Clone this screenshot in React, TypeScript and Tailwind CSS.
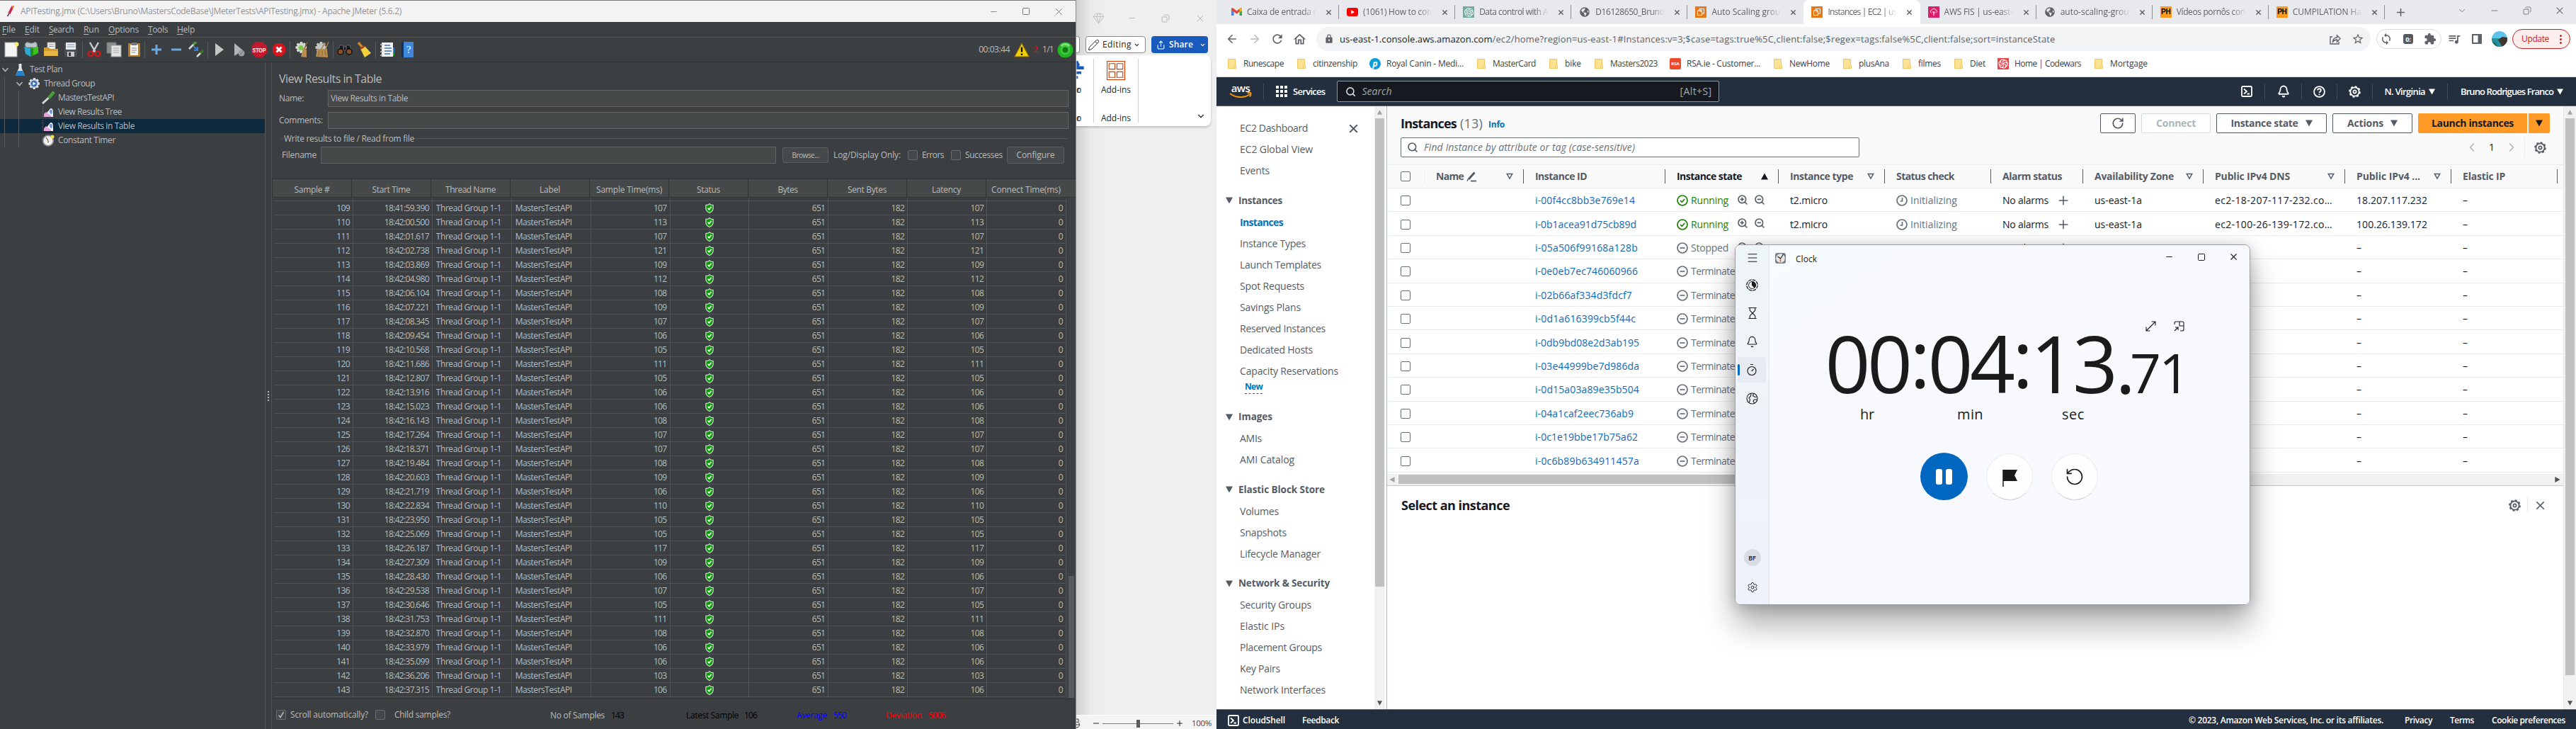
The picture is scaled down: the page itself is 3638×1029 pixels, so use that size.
import { useLayoutEffect, useRef, useState, type ReactNode } from "react";
import {
  ArrowLeft, ArrowRight, Bell, ChevronDown, ChevronLeft, ChevronRight, Copy, Gem, Hourglass,
  Menu, Minus, Pencil, Plus, RotateCcw, RotateCw, Search, Settings, Share, Square, Timer, X, ZoomIn, ZoomOut,
} from "lucide-react";
import { FaGlobeAmericas } from "react-icons/fa";
import { MdExtension, MdLock, MdOutlineHome, MdQueueMusic, MdRefresh, MdStarBorder, MdSync } from "react-icons/md";
import { SiOpenai, SiCodewars } from "react-icons/si";

/* Text whose tracking is adjusted so that it occupies an exact width. */
function Fit({ w, className = "", children }: { w: number; className?: string; children: ReactNode }) {
  const ref = useRef<HTMLSpanElement>(null);
  const [spacing, setSpacing] = useState(0);
  useLayoutEffect(() => {
    const el = ref.current;
    if (!el) return;
    el.style.letterSpacing = "0px";
    const next = (w - el.getBoundingClientRect().width) / Math.max(1, (el.textContent || "").length);
    el.style.letterSpacing = next + "px";
    setSpacing(next);
  }, [w]);
  return (
    <span ref={ref} className={"inline-block shrink-0 whitespace-pre " + className} style={{ letterSpacing: spacing }}>
      {children}
    </span>
  );
}

/* ------------------------------------------------------------------ JMeter */

const samples: [string, number][] = [
  ["18:41:59.390", 107], ["18:42:00.500", 113], ["18:42:01.617", 107], ["18:42:02.738", 121], ["18:42:03.869", 109],
  ["18:42:04.980", 112], ["18:42:06.104", 108], ["18:42:07.221", 109], ["18:42:08.345", 107], ["18:42:09.454", 106],
  ["18:42:10.568", 105], ["18:42:11.686", 111], ["18:42:12.807", 105], ["18:42:13.916", 106], ["18:42:15.023", 106],
  ["18:42:16.143", 108], ["18:42:17.264", 107], ["18:42:18.371", 107], ["18:42:19.484", 108], ["18:42:20.603", 109],
  ["18:42:21.719", 106], ["18:42:22.834", 110], ["18:42:23.950", 105], ["18:42:25.069", 105], ["18:42:26.187", 117],
  ["18:42:27.309", 109], ["18:42:28.430", 106], ["18:42:29.538", 107], ["18:42:30.646", 105], ["18:42:31.753", 111],
  ["18:42:32.870", 108], ["18:42:33.979", 106], ["18:42:35.099", 106], ["18:42:36.206", 103], ["18:42:37.315", 106],
];

const jHeaders: [string, number][] = [
  ["Sample #", 50], ["Start Time", 54], ["Thread Name", 71], ["Label", 29], ["Sample Time(ms)", 93],
  ["Status", 33], ["Bytes", 28], ["Sent Bytes", 55], ["Latency", 41], ["Connect Time(ms)", 98],
];

function Shield() {
  return (
    <svg width="14" height="16" viewBox="0 0 14 16">
      <path d="M7 .5 9 2.2l4 .6v5.4c0 3-2.4 5.4-6 7.3C3.400 13.600 1 11.200 1 8.200V2.800l4-.6z" fill="#dfe6df" stroke="#222" strokeWidth=".5" />
      <path d="M7 2.200 8.600 3.500l3 .5v4.200c0 2.300-1.800 4.200-4.600 5.800C4.200 12.400 2.400 10.500 2.400 8.200V4l3-.5z" fill="#0a9a0a" />
      <path d="m4.600 7.800 1.900 2 3.100-4" fill="none" stroke="#fff" strokeWidth="1.500" />
    </svg>
  );
}

function ToolSep() {
  return <span className="flex h-6 w-[4.500px] shrink-0 justify-center"><span className="w-px bg-[#55595b]" /></span>;
}

function Tool({ children }: { children: ReactNode }) {
  return (
    <span className="flex w-7 shrink-0 items-center justify-center">
      <svg width="22" height="22" viewBox="0 0 22 22" fill="none">{children}</svg>
    </span>
  );
}

const cog = "M9 0h3l.6 2.600 2.300-1.300 2 2-1.300 2.300L18 6.500v3l-2.600.7 1.300 2.300-2 2-2.300-1.300L11.700 16H8.700L8 13.300l-2.300 1.300-2-2L5 10.300 2.400 9.600v-3L5 5.900 3.700 3.600l2-2L8 2.900z";

function JMeterToolbar() {
  return (
    <div className="flex h-[35px] items-center border-b border-[#323232] bg-[#3c3f41] pl-[2px]">
      <Tool>
        <rect x="2" y="1" width="17" height="20" fill="#f4f4f2" stroke="#aaa" />
        <circle cx="18.500" cy="3.500" r="3" fill="#f5ee78" />
      </Tool>
      <Tool>
        <path d="M4 8C1 4 3 0 7 1s4 2 8 0 5 3 4 7z" fill="#b9c6cc" stroke="#7d8c92" />
        <path d="m1 7 9 2v12L3 17z" fill="#2ca8cf" />
        <path d="m10 9 11-2v9l-11 5z" fill="#3fc21c" />
        <path d="m10 9 4 1v9l-4 2z" fill="#1f8c18" />
      </Tool>
      <Tool>
        <path d="M6 1h11v12H6z" fill="#eee" stroke="#aaa" />
        <path d="M8 4h7M8 6.500h7" stroke="#999" />
        <path d="M1 8h7l2 2h11v10H1z" fill="#d79a23" />
        <path d="M1 13h20v7H1z" fill="#e8b445" />
      </Tool>
      <Tool>
        <path d="M2 2h18v19H2z" fill="#4a5054" />
        <path d="M4 1h14v10H4z" fill="#e6eaf0" />
        <path d="M6 4h10M6 7h10" stroke="#8a9bb5" />
        <path d="M6 14h10v7H6z" fill="#c9cccf" />
        <path d="M8 15h3v5H8z" fill="#333" />
      </Tool>
      <ToolSep />
      <Tool>
        <path d="M5 1l8 14M17 1 9 15" stroke="#c8ccd0" strokeWidth="2.500" />
        <ellipse cx="6" cy="17" rx="3.500" ry="3.500" stroke="#d01818" strokeWidth="2.400" />
        <ellipse cx="16" cy="17" rx="3.500" ry="3.500" stroke="#d01818" strokeWidth="2.400" />
      </Tool>
      <Tool>
        <rect x="1" y="1" width="13" height="15" fill="#8d9090" stroke="#6d7070" />
        <rect x="7" y="5" width="14" height="16" fill="#e4e5e3" stroke="#9a9a9a" />
        <path d="M10 9h8M10 12h8M10 15h8" stroke="#a5a5a5" />
      </Tool>
      <Tool>
        <rect x="3" y="2" width="17" height="19" rx="1" fill="#b87a1c" />
        <rect x="6" y="4" width="11" height="15" fill="#f3f3ef" />
        <path d="M8 1h7v4H8z" fill="#777" />
        <path d="M8 9h7M8 12h7M8 15h5" stroke="#8a8a8a" />
      </Tool>
      <ToolSep />
      <Tool><path d="M11 4v14M4 11h14" stroke="#6fa6dc" strokeWidth="3" /></Tool>
      <Tool><path d="M4 11h14" stroke="#6fa6dc" strokeWidth="3" /></Tool>
      <Tool>
        <path d="m1 10 8-8" stroke="#d8dcd8" strokeWidth="2.500" />
        <path d="m7 4 4-4" stroke="#3fa32c" strokeWidth="3.500" />
        <path d="m7 6 6 6m0-5v5H8" stroke="#3d7fd6" strokeWidth="1.800" />
        <path d="m12 21 6-6" stroke="#d8dcd8" strokeWidth="2.500" />
        <path d="m17 16 4-4" stroke="#2e7d22" strokeWidth="3.500" />
      </Tool>
      <ToolSep />
      <Tool><path d="M5 2v18l12-9z" fill="#c3c6c6" /></Tool>
      <Tool>
        <path d="M4 2v18l12-8z" fill="#b3b6b6" />
        <circle cx="14" cy="16" r="4.500" fill="#9a9d9d" />
        <path d="m11 19 6-6" stroke="#777" />
      </Tool>
      <Tool>
        <path d="M6.500 0h9L22 6.500v9L15.500 22h-9L0 15.500v-9z" fill="#c4182c" />
        <text x="11" y="14.500" fontSize="8.500" fontWeight="700" textAnchor="middle" fill="#fff" textLength="19" lengthAdjust="spacingAndGlyphs" fontFamily="Liberation Sans, sans-serif">STOP</text>
      </Tool>
      <Tool>
        <path d="M7 2h8l5 5v8l-5 5H7l-5-5V7z" fill="#d8141c" />
        <path d="m7.500 7.500 7 7m0-7-7 7" stroke="#fff" strokeWidth="3" />
      </Tool>
      <ToolSep />
      <Tool>
        <path d={cog} fill="#d5d8d5" />
        <circle cx="10" cy="8.500" r="3.500" fill="#7cc94a" />
        <path d="m19 0-4 10" stroke="#8c5a28" strokeWidth="1.500" />
        <path d="m13 9 5 2 0 11-8-1z" fill="#b98c50" />
      </Tool>
      <Tool>
        <path d={cog} fill="#c3c6c3" />
        <path d="m21 0-4 10M16 1l-5 9" stroke="#a87a40" strokeWidth="1.500" />
        <path d="m5 10 14 0 1 12-17-1z" fill="#b98c50" />
        <path d="m8 12-1 8m5-8v8m4-8 1 8" stroke="#8a6430" />
      </Tool>
      <ToolSep />
      <Tool>
        <path d="M4 5h5v8H2zM13 5h5l2 8h-7zM9 7h4v5H9z" fill="#15171a" stroke="#6d7070" strokeWidth=".8" />
        <circle cx="5" cy="14" r="4" fill="#8a4d28" stroke="#111" strokeWidth="1.500" />
        <circle cx="17" cy="14" r="4" fill="#8a4d28" stroke="#111" strokeWidth="1.500" />
      </Tool>
      <Tool>
        <path d="m2 1 6 7" stroke="#c8862a" strokeWidth="3.500" />
        <path d="m5 10 6-4 9 10-9 6z" fill="#f0d23a" />
        <path d="m5 10 6-4" stroke="#c03a1c" strokeWidth="2.500" />
      </Tool>
      <ToolSep />
      <Tool>
        <path d="M3 1h16v20H3z" fill="#f2f2f2" />
        <path d="M1 4h4M1 9h4M1 14h4M1 19h4" stroke="#ccc" strokeWidth="1.500" />
        <path d="M7 5h8M7 9h10M7 13h10M7 17h8" stroke="#3f6fc0" strokeWidth="1.500" />
        <path d="M20 8v6" stroke="#2a7de0" strokeWidth="2" /><path d="M20 14v6" stroke="#2aa02a" strokeWidth="2" />
      </Tool>
      <Tool>
        <path d="M3 0h4v22H3z" fill="#16325c" />
        <path d="M6 0h14v22H6z" fill="#3f86dd" />
        <text x="13" y="16" fontSize="15" textAnchor="middle" fill="#fff" fontFamily="Liberation Serif, serif">?</text>
      </Tool>
      <div className="ml-auto flex items-center pr-[3px]">
        <Fit w={44}>00:03:44</Fit>
        <svg className="ml-[6px]" width="22" height="21" viewBox="0 0 22 21">
          <path d="M11 1 21.300 20H.7z" fill="#f2cf0c" stroke="#8a6a00" strokeWidth="1.200" />
          <path d="M11 6.500v7M11 15.500v2.500" stroke="#111" strokeWidth="2.400" />
        </svg>
        <span className="ml-[5px] text-[#ff0000]">2</span>
        <Fit w={16} className="ml-[6px]">1/1</Fit>
        <svg className="ml-[5px]" width="23" height="23" viewBox="0 0 22 22">
          <circle cx="11" cy="11" r="10.500" fill="#22b422" />
          <ellipse cx="11" cy="5" rx="6" ry="3" fill="#b4f0b0" opacity=".7" />
          <circle cx="11" cy="11" r="6.500" fill="#3ccc3c" />
          <circle cx="11" cy="11" r="3.800" fill="#157a15" />
        </svg>
      </div>
    </div>
  );
}

function TreeChevron() {
  return (
    <svg width="9" height="7" viewBox="0 0 9 7" className="shrink-0">
      <path d="M.5 1 4.500 5.500 8.500 1" fill="none" stroke="#adb0b2" strokeWidth="1.800" />
    </svg>
  );
}

function ChartIcon() {
  return (
    <svg width="16" height="16" viewBox="0 0 16 16" className="shrink-0">
      <path d="M.5 0v16" stroke="#777" strokeDasharray="1 1" />
      <path d="M2 15v-4l3-3 4 2 3 5z" fill="#e5a5dc" />
      <path d="M7 8c2-1 3-5 5-5s3 2 3 5v7h-3c-1-3-3-4-5-5z" fill="#f0f4f8" />
      <path d="M10 6c1-2 4-2 4 2l-1 3c-2 0-3-2-3-5z" fill="#6b93d8" />
    </svg>
  );
}

function Tree() {
  return (
    <div className="relative w-[374px] shrink-0">
      <div className="flex h-5 items-center pl-[3px]">
        <TreeChevron />
        <svg className="ml-[9px] shrink-0" width="15" height="19" viewBox="0 0 15 19">
          <path d="M5.500 1h4v6l4.500 11H1L5.500 7z" fill="#dfe6ea" />
          <path d="M4 11h7l3 7H1z" fill="#2a7fc9" />
        </svg>
        <Fit w={46} className="ml-[6px]">Test Plan</Fit>
      </div>
      <div className="flex h-5 items-center pl-[23px]">
        <TreeChevron />
        <svg className="ml-[7px] shrink-0" width="18" height="18" viewBox="1.500 -1 17 18">
          <path d={cog} fill="#dadde4" /><circle cx="10" cy="8" r="4.600" fill="#3b6fb5" /><path d="m8.500 5.500 4 2.500-4 2.500z" fill="#fff" />
        </svg>
        <Fit w={72} className="ml-[5px]">Thread Group</Fit>
      </div>
      <div className="flex h-5 items-center pl-[59px]">
        <svg className="shrink-0" width="19" height="18" viewBox="0 0 19 18">
          <path d="m1 17 11-10" stroke="#d3d8d3" strokeWidth="3" /><path d="m11 8 5-6" stroke="#4d9a3c" strokeWidth="4.500" strokeLinecap="round" />
        </svg>
        <Fit w={79} className="ml-[4px]">MastersTestAPI</Fit>
      </div>
      <div className="flex h-5 items-center pl-[60px]"><ChartIcon /><Fit w={90} className="ml-[6px]">View Results Tree</Fit></div>
      <div className="flex h-5 items-center bg-[#0d293e] pl-[60px]"><ChartIcon /><Fit w={108} className="ml-[6px]">View Results in Table</Fit></div>
      <div className="flex h-5 items-center pl-[60px]">
        <svg className="shrink-0" width="17" height="17" viewBox="0 0 17 17">
          <circle cx="8" cy="8.500" r="7.300" fill="#f3f3ea" stroke="#8a8a9a" strokeWidth="1.800" />
          <path d="M8 8.500 5 4M8 8.500v3" stroke="#333" /><circle cx="14" cy="3" r="2.500" fill="#f0e04a" />
        </svg>
        <Fit w={81} className="ml-[5px]">Constant Timer</Fit>
      </div>
      <span className="absolute left-[6px] top-5 h-[100px] w-px bg-[#55595b]" />
      <span className="absolute left-[26px] top-10 h-[80px] w-px bg-[#55595b]" />
    </div>
  );
}

function JCheck({ on = false }: { on?: boolean }) {
  return (
    <span className="flex size-[14px] shrink-0 items-center justify-center rounded-[2px] border border-[#6b6b6b] bg-[#43494a]">
      {on && <svg width="10" height="10" viewBox="0 0 10 10"><path d="M1.500 5.500 4 8.500 8.500 1" fill="none" stroke="#b5b5b5" strokeWidth="1.600" /></svg>}
    </span>
  );
}

function Cell({ children }: { children: ReactNode }) {
  return <div className="flex w-[112px] items-center justify-end border-r border-[#505456] pr-[4px] tracking-[-0.65px]">{children}</div>;
}

function JMeter() {
  const menus: [string, number, string][] = [
    ["File", 19, "ml-0"], ["Edit", 21, "ml-[13px]"], ["Search", 35, "ml-[13px]"], ["Run", 22, "ml-[14px]"],
    ["Options", 43, "ml-[13px]"], ["Tools", 28, "ml-[13px]"], ["Help", 25, "ml-[13px]"],
  ];
  return (
    <div className="flex h-[1029px] w-[1520px] shrink-0 flex-col border-r border-[#8b8b8b] bg-[#3c3f41] font-['Open_Sans',sans-serif] text-[12px] leading-none text-[#bbbbbb]">
      <div className="flex h-[31px] shrink-0 items-center border-t border-[#7e797b] bg-[#f3f3f3] text-[#939393]">
        <svg className="ml-[9px]" width="11" height="16" viewBox="0 0 11 16">
          <path d="M9 1 4 11" stroke="#c32a4b" strokeWidth="3.500" /><path d="m8 2 2-1-1 3" stroke="#e8892a" strokeWidth="2" fill="none" /><path d="m4 11-2.500 4" stroke="#5a3a5a" strokeWidth="1.500" />
        </svg>
        <Fit w={538} className="ml-[9px] leading-4">{"APITesting.jmx (C:\\Users\\Bruno\\MastersCodeBase\\JMeterTests\\APITesting.jmx) - Apache JMeter (5.6.2)"}</Fit>
        <div className="ml-auto flex items-center pr-[16px] text-[#777]">
          <Minus size={13} strokeWidth={1.6} /><Square size={12} strokeWidth={2} className="ml-[33px]" /><X size={15} strokeWidth={1.6} className="ml-[33px]" />
        </div>
      </div>
      <div className="flex h-[22px] shrink-0 items-center border-b border-[#555555] pl-[3px]">
        {menus.map(([m, w, ml]) => (
          <span key={m} className={ml}><Fit w={w}><span className="underline underline-offset-2">{m[0]}</span>{m.slice(1)}</Fit></span>
        ))}
      </div>
      <JMeterToolbar />
      <div className="flex min-h-0 flex-1">
        <Tree />
        <div className="flex w-[10px] shrink-0 flex-col items-center justify-center gap-[2px] border-x border-[#515456]">
          {[0, 1, 2, 3].map((i) => <span key={i} className="size-[2px] bg-[#b5b8ba]" />)}
        </div>
        <div className="flex min-w-0 flex-1 flex-col">
          <div className="flex h-[39px] shrink-0 items-center pl-[10px] pt-[7px]"><Fit w={145} className="text-[16px]">View Results in Table</Fit></div>
          <div className="flex h-6 shrink-0 items-center pl-[10px] pr-[10px]">
            <Fit w={35}>Name:</Fit>
            <div className="ml-[34px] flex h-6 flex-1 items-center border border-[#646464] bg-[#45494a] pl-[3px]"><Fit w={109}>View Results in Table</Fit></div>
          </div>
          <div className="mt-[7px] flex h-6 shrink-0 items-center pl-[10px] pr-[10px]">
            <Fit w={62}>Comments:</Fit>
            <div className="ml-[7px] h-6 flex-1 border border-[#646464] bg-[#45494a]" />
          </div>
          <div className="mt-[6px] flex h-[15px] shrink-0 items-center pl-[12px] pr-[12px]">
            <span className="h-px w-[3px] bg-[#555]" /><Fit w={184} className="ml-[2px]">Write results to file / Read from file</Fit><span className="h-px flex-1 bg-[#555a5c]" />
          </div>
          <div className="mt-1 flex h-6 shrink-0 items-center pl-[14px] pr-[16px]">
            <Fit w={49}>Filename</Fit>
            <div className="ml-[6px] h-6 flex-1 border border-[#646464] bg-[#45494a]" />
            <div className="ml-[9px] flex h-[22px] w-[65px] items-center justify-center rounded-[3px] border border-[#5e6060] bg-[#45494b] text-[10px]"><Fit w={38}>Browse...</Fit></div>
            <Fit w={95} className="ml-[7px]">Log/Display Only:</Fit>
            <span className="ml-[10px]"><JCheck /></span>
            <Fit w={31} className="ml-[6px]">Errors</Fit>
            <span className="ml-[10px]"><JCheck /></span>
            <Fit w={53} className="ml-[6px]">Successes</Fit>
            <div className="ml-[6px] flex h-6 w-[81px] items-center justify-center rounded-[3px] border border-[#5e6060] bg-[#45494b]"><Fit w={54}>Configure</Fit></div>
          </div>
          <div className="mt-[21px] flex h-[27px] shrink-0 border-y border-l border-[#323435] bg-[#45494a]">
            {jHeaders.map(([h, w], i) => (
              <div key={h} className={"flex w-[112px] items-center justify-center pt-1 " + (i < 9 ? "border-r border-[#323435]" : "")}><Fit w={w}>{h}</Fit></div>
            ))}
          </div>
          <div className="flex h-[708px] shrink-0 border-b border-[#323435]">
            <div className="w-[1122px] pl-[3px] pt-[2px]">
              <div className="flex h-[3px] border-b border-[#505456]">
                {jHeaders.map(([h]) => <span key={h} className="w-[112px] border-r border-[#505456]" />)}
              </div>
              {samples.map(([time, ms], i) => (
                <div key={time} className="flex h-5 border-b border-[#505456]">
                  <Cell>{109 + i}</Cell>
                  <div className="flex w-[112px] items-center justify-end border-r border-[#505456] pr-[4px]"><Fit w={63}>{time}</Fit></div>
                  <div className="flex w-[112px] items-center border-r border-[#505456] pl-[5px]"><Fit w={92}>Thread Group 1-1</Fit></div>
                  <div className="flex w-[112px] items-center border-r border-[#505456] pl-[5px]"><Fit w={80}>MastersTestAPI</Fit></div>
                  <Cell>{ms}</Cell>
                  <div className="flex w-[112px] items-center justify-center border-r border-[#505456]"><Shield /></div>
                  <Cell>651</Cell><Cell>182</Cell><Cell>{ms}</Cell><Cell>0</Cell>
                </div>
              ))}
            </div>
            <div className="flex flex-1 flex-col items-center justify-end bg-[#3f4244] pb-px"><div className="h-[172px] w-2 bg-[#595c5e]" /></div>
          </div>
          <div className="flex flex-1 items-center pl-[6px] pt-[2px]">
            <JCheck on /><Fit w={110} className="ml-[6px]">Scroll automatically?</Fit>
            <span className="ml-[10px]"><JCheck /></span><Fit w={79} className="ml-[13px]">Child samples?</Fit>
            <Fit w={77} className="ml-[141px] mt-[2px]">No of Samples</Fit><Fit w={18} className="ml-[9px] mt-[2px] text-black">143</Fit>
            <Fit w={74} className="ml-[88px] mt-[2px] text-black">Latest Sample</Fit><Fit w={18} className="ml-[8px] mt-[2px] text-black">106</Fit>
            <Fit w={43} className="ml-[56px] mt-[2px] text-[#0000ff]">Average</Fit><Fit w={18} className="ml-[9px] mt-[2px] text-[#0000ff]">550</Fit>
            <Fit w={51} className="ml-[56px] mt-[2px] text-[#ff0000]">Deviation</Fit><Fit w={24} className="ml-[9px] mt-[2px] text-[#ff0000]">5006</Fit>
          </div>
        </div>
      </div>
    </div>
  );
}

/* -------------------------------------------------------------------- Word */

function Word() {
  return (
    <div className="flex h-[1029px] w-[198px] shrink-0 flex-col bg-[#efefef] bg-linear-to-r from-[#cfcfcf] via-[#eaeaea] via-10% to-[#efefef] to-20% font-['Open_Sans',sans-serif] text-[12px] leading-none text-[#242424]">
      <div className="flex h-[51px] shrink-0 items-center pl-[23px] text-[#b3b3b3]">
        <Gem size={17} strokeWidth={1.1} />
        <Minus size={13} strokeWidth={1.6} className="ml-[32px]" />
        <Copy size={12} strokeWidth={1.8} className="ml-[35px] -scale-x-100" />
        <X size={16} strokeWidth={1.5} className="ml-[35px]" />
      </div>
      <div className="flex h-6 shrink-0 items-center">
        <span className="h-6 w-[5px] rounded-r-[4px] border border-l-0 border-[#8a8a8a] bg-white" />
        <div className="ml-2 flex h-6 w-[85px] items-center rounded-[4px] border border-[#8a8a8a] bg-white pl-[2px]">
          <Pencil size={17} strokeWidth={1.4} /><Fit w={41} className="ml-[4px]">Editing</Fit><ChevronDown size={9} strokeWidth={3} className="ml-[3px]" />
        </div>
        <div className="ml-2 flex h-6 w-[80px] items-center rounded-[4px] bg-[#185abd] pl-[7px] text-white">
          <Share size={13} strokeWidth={2} /><Fit w={34} className="ml-[5px] font-semibold">Share</Fit><ChevronDown size={9} strokeWidth={3} className="ml-[9px]" />
        </div>
      </div>
      <div className="mt-[3px] flex h-[100px] w-[190px] shrink-0 rounded-r-lg bg-white shadow-[0_2px_3px_rgba(0,0,0,0.2)]">
        <div className="my-[5px] flex w-[25px] flex-col border-r border-[#cfcfcf] pt-[3px]">
          <svg width="12" height="28" viewBox="0 0 12 28"><path d="M0 0h2l3 6-2 3H0zM0 8h11v5H0zM0 16h7v4H0zM0 23h2v4H0z" fill="#185abd" /></svg>
          <Fit w={11} className="mt-[9px]">or</Fit><Fit w={11} className="mt-[28px]">or</Fit>
        </div>
        <div className="my-[5px] flex w-[63px] flex-col items-center border-r border-[#cfcfcf] pt-[3px]">
          <svg width="28" height="29" viewBox="0 0 28 29" fill="none" stroke="#d83b01" strokeWidth="1.200">
            <path d="M.6.6h26.800v27.800H.6zM3.500 4h9v8.500h-9zM15.500 4h9v8.500h-9zM3.500 16.500h9V25h-9zM15.500 16.500h9V25h-9z" />
          </svg>
          <Fit w={42} className="mt-[8px]">Add-ins</Fit><Fit w={42} className="mt-[28px]">Add-ins</Fit>
        </div>
        <ChevronDown size={14} strokeWidth={2} className="ml-auto mr-[7px] mt-[79px]" />
      </div>
      <div className="mt-auto flex h-[20px] shrink-0 items-center border-t border-white bg-[#f4f4f4] pt-[3px]">
        <svg width="5" height="14" viewBox="0 0 5 14" fill="none" stroke="#333"><path d="M0 1h3v4M0 5c6 0 6 8 0 8M0 9h4" /></svg>
        <Minus size={12} strokeWidth={2} className="ml-[17px]" />
        <div className="relative ml-[3px] h-px w-[100px] bg-[#7a7a7a]"><span className="absolute left-[48px] top-[-5px] h-[11px] w-[5px] bg-[#5a5a5a]" /></div>
        <Plus size={12} strokeWidth={2} className="ml-[3px]" /><Fit w={28} className="ml-[11px] text-[11.500px] text-[#444]">100%</Fit>
      </div>
    </div>
  );
}

/* ------------------------------------------------------------------ Chrome */

const GmailIcon = () => (
  <svg width="15" height="12" viewBox="0 0 15 12">
    <path d="M0 1.500V11h3.500V5z" fill="#4285f4" /><path d="M15 1.500V11h-3.500V5z" fill="#34a853" />
    <path d="M0 1.500C0 .2 1.500-.2 2.500.5l5 4 5-4c1-.7 2.500-.3 2.500 1V3L7.500 8.500 0 3z" fill="#ea4335" />
    <path d="M11.500 1.200 15 .8V4l-3.500 2.600z" fill="#fbbc04" />
  </svg>
);
const YoutubeIcon = () => (
  <svg width="16" height="12" viewBox="0 0 16 12"><rect width="16" height="12" rx="3" fill="#f00" /><path d="m6.300 3.300 4.500 2.700-4.500 2.700z" fill="#fff" /></svg>
);
const Ec2Icon = () => (
  <svg width="16" height="16" viewBox="0 0 16 16"><rect width="16" height="16" fill="#e8791b" /><path d="M3.500 6h6v6.500h-6zM6 6V3.500h6.500V10H9.500M8 8V4.500" fill="none" stroke="#fff" /></svg>
);
const FisIcon = () => (
  <svg width="16" height="16" viewBox="0 0 16 16"><rect width="16" height="16" fill="#dc1f6b" /><path d="M4.500 9C2.500 8 3.500 5 5.500 5c1-2.500 4.500-2 5 0 2 0 3 3 1 4M8 7v6M8 9l-2-1.500M8 10l2.500-2" fill="none" stroke="#fff" /></svg>
);
const PhIcon = () => (
  <span className="flex size-4 items-center justify-center bg-[#ff9a1f] font-['Liberation_Sans',sans-serif] text-[10px] font-bold tracking-tight text-black">PH</span>
);

const tabs: { icon: ReactNode; title: string; active?: boolean; noSep?: boolean }[] = [
  { icon: <GmailIcon />, title: "Caixa de entrada (" },
  { icon: <YoutubeIcon />, title: "(1061) How to con" },
  { icon: <span className="flex size-4 items-center justify-center bg-[#74aa9c] text-white"><SiOpenai size={13} /></span>, title: "Data control with A" },
  { icon: <FaGlobeAmericas size={14} />, title: "D16128650_Bruno" },
  { icon: <Ec2Icon />, title: "Auto Scaling grou", noSep: true },
  { icon: <Ec2Icon />, title: "Instances | EC2 | us", active: true, noSep: true },
  { icon: <FisIcon />, title: "AWS FIS | us-east-" },
  { icon: <FaGlobeAmericas size={14} />, title: "auto-scaling-grou" },
  { icon: <PhIcon />, title: "Vídeos pornôs con" },
  { icon: <PhIcon />, title: "CUMPILATION Ha" },
];

const Folder = () => (
  <svg width="12" height="14" viewBox="0 0 12 14"><path d="M.5.5h10v9h1v4H.5z" fill="#fde293" stroke="#efc75e" /><path d="M8.500 10v3.500" stroke="#efc75e" /></svg>
);

const bookmarks: [string, number, ReactNode?][] = [
  ["Runescape", 57], ["citinzenship", 63],
  ["Royal Canin - Medi...", 109, <span key="r" className="flex size-4 items-center justify-center rounded-full bg-[#0d9ddb] text-[12px] font-bold italic text-white">p</span>],
  ["MasterCard", 61], ["bike", 23], ["Masters2023", 67],
  ["RSA.ie - Customer...", 104, <span key="s" className="flex size-4 items-center justify-center rounded-[2px] bg-[#ee4b2b] text-[6px] font-bold text-white">RSA</span>],
  ["NewHome", 57], ["plusAna", 43], ["filmes", 32], ["Diet", 22],
  ["Home | Codewars", 94, <SiCodewars key="c" size={16} className="text-[#e8434c]" />],
  ["Mortgage", 53],
];

function ChromeFrame() {
  return (
    <>
      <div className="flex h-[34px] shrink-0 items-center bg-[#e8e9ed] pl-[9px] text-[12px] text-[#5f6368]">
        {tabs.map((t, i) => (
          <div key={i} className={"flex h-[34px] w-[164.100px] shrink-0 items-center pl-[11px] " + (t.active ? "rounded-t-lg bg-white" : "")}>
            <span className="flex w-4 justify-center">{t.icon}</span>
            <span className="ml-[7px] w-[98px] overflow-hidden whitespace-nowrap leading-5 [mask-image:linear-gradient(to_right,black_80%,transparent)]"><Fit w={97}>{t.title}</Fit></span>
            <X size={11} strokeWidth={3} className="ml-[12px] text-[#5a5d61]" />
            {!(t.noSep) && <span className="ml-auto h-5 w-px bg-[#8b8e93]" />}
          </div>
        ))}
        <Plus size={17} strokeWidth={2.2} className="ml-[14px]" />
        <div className="ml-auto flex items-center pb-[5px] pr-[15px] text-[#777]">
          <ChevronDown size={14} strokeWidth={1.6} /><Minus size={14} strokeWidth={1.6} className="ml-[32px]" />
          <Copy size={12} strokeWidth={1.8} className="ml-[33px] -scale-x-100" /><X size={16} strokeWidth={1.6} className="ml-[32px]" />
        </div>
      </div>
      <div className="flex h-[38px] shrink-0 items-center bg-white pt-[4px] text-[#5f6368]">
        <ArrowLeft size={18} strokeWidth={2.2} className="ml-[13px]" />
        <ArrowRight size={18} strokeWidth={2.2} className="ml-[14px] text-[#b9bbbe]" />
        <MdRefresh size={20} className="ml-[13px]" />
        <MdOutlineHome size={21} className="ml-[11px]" />
        <div className="ml-[13px] flex h-[34px] w-[1489px] items-center rounded-full bg-[#f1f3f4] pl-[11px]">
          <MdLock size={14} />
          <span className="ml-[8px] flex text-[13px]">
            <Fit w={215.5} className="text-[#202124]">us-east-1.console.aws.amazon.com</Fit>
            <Fit w={795}>/ec2/home?region=us-east-1#Instances:v=3;$case=tags:true%5C,client:false;$regex=tags:false%5C,client:false;sort=instanceState</Fit>
          </span>
          <svg className="ml-auto" width="16" height="15" viewBox="0 0 16 15" fill="none" stroke="currentColor" strokeWidth="1.400">
            <path d="M4 4H1v10h12v-3M4.500 11c.3-4 3-6 6-6V2l4.500 4.500L10.500 11V8c-3 0-4.500 1-6 3z" />
          </svg>
          <MdStarBorder size={18} className="ml-[15px] mr-[9px]" />
        </div>
        <div className="ml-[8px] flex h-[28px] w-[92px] items-center rounded-full border border-[#dadce0] pl-[4px]">
          <MdSync size={18} />
          <span className="ml-[15px] flex size-[14px] items-center justify-center rounded-[3px] bg-[#55585c] text-[9px] font-bold text-white">0:</span>
          <MdExtension size={18} className="ml-[15px]" />
        </div>
        <MdQueueMusic size={20} className="ml-[8px]" />
        <svg className="ml-[15px]" width="14" height="14" viewBox="0 0 14 14"><path d="M1 1h12v12H1z" fill="none" stroke="currentColor" strokeWidth="2" /><path d="M8.500 1H13v12H8.500z" fill="currentColor" /></svg>
        <svg className="ml-[14px]" width="22" height="22" viewBox="0 0 22 22">
          <clipPath id="av"><circle cx="11" cy="11" r="11" /></clipPath>
          <g clipPath="url(#av)"><path d="M0 0h22v22H0z" fill="#5fc4ea" /><path d="M0 10h22v12H0z" fill="#22929e" /><path d="m9 12 6-4 7 1v13h-7z" fill="#40352f" /><path d="M0 15c4-2 6 2 9 7H0z" fill="#2a6d63" /></g>
        </svg>
        <div className="ml-[7px] flex h-[28px] w-[82px] items-center rounded-full border border-[#c5221f] bg-[#fceeed] pl-[12px] text-[#c5221f]">
          <Fit w={39} className="text-[12px]">Update</Fit>
          <span className="ml-[15px] flex flex-col gap-[2px]">{[0, 1, 2].map((i) => <i key={i} className="size-[3px] rounded-full bg-[#c5221f]" />)}</span>
        </div>
      </div>
      <div className="flex h-[37px] shrink-0 items-center gap-[17px] border-b border-[#d5d7da] bg-white pl-[14px] text-[12px] text-[#3c4043]">
        {bookmarks.map(([b, w, icon]) => (
          <span key={b} className="flex items-center gap-2"><span className="flex w-4 justify-center">{icon || <Folder />}</span><Fit w={w}>{b}</Fit></span>
        ))}
      </div>
    </>
  );
}

/* --------------------------------------------------------------------- AWS */

function AwsGear({ size = 17, className = "" }: { size?: number; className?: string }) {
  return (
    <svg width={size} height={size} viewBox="0 0 16 16" fill="none" stroke="currentColor" className={"shrink-0 " + className}>
      <circle cx="8" cy="8" r="5.800" strokeWidth="1.800" /><circle cx="8" cy="8" r="7.100" strokeWidth="1.500" strokeDasharray="2.800 2.770" /><circle cx="8" cy="8" r="2" strokeWidth="1.600" />
    </svg>
  );
}
function Tri({ size = 10, up = false, hollow = false, className = "" }: { size?: number; up?: boolean; hollow?: boolean; className?: string }) {
  return (
    <svg width={size} height={size} viewBox="0 0 10 10" className={"shrink-0 " + (up ? "rotate-180 " : "") + className}>
      <path d={hollow ? "M1.300 1.500h7.400L5 8z" : "M0 .5h10L5 9.500z"} fill={hollow ? "none" : "currentColor"} stroke={hollow ? "currentColor" : "none"} strokeWidth="1.500" />
    </svg>
  );
}
function ShellIcon({ size = 16 }: { size?: number }) {
  return (
    <svg width={size} height={size} viewBox="0 0 16 16" fill="none" stroke="#fff" strokeWidth="1.800" className="shrink-0"><rect x="1" y="1" width="14" height="14" rx="1.500" /><path d="m4 4.500 4 3.500-4 3.500M8.500 11.500H12" /></svg>
  );
}
const HeadSep = ({ className = "" }: { className?: string }) => <span className={"h-[22px] w-px shrink-0 bg-[#414d5c] " + className} />;

function AwsHeader() {
  return (
    <div className="flex h-[41px] shrink-0 items-center border-b border-[#566270] bg-[#232f3e] text-[13px] font-semibold text-white">
      <div className="ml-[18px] flex w-[32px] flex-col items-center">
        <span className="text-[15px] font-semibold leading-[11px] tracking-[-0.5px]">aws</span>
        <svg width="32" height="9" viewBox="0 0 32 9" fill="none" stroke="#ff9900" strokeWidth="1.800"><path d="M1 2c8 6 20 7 28 1M25.500 1.500c2-.8 4-.8 5 0 .3 1.500-.5 3.500-1.800 5" /></svg>
      </div>
      <HeadSep className="ml-[16px]" />
      <div className="ml-[17px] grid size-4 grid-cols-3 gap-[2px]">{Array.from({ length: 9 }, (_, i) => <i key={i} className="bg-white" />)}</div>
      <Fit w={45.5} className="ml-[8px]">Services</Fit>
      <div className="ml-[16px] flex h-[30px] w-[540px] items-center rounded-[2px] border border-[#8c9a9d] bg-[#161920] pl-[11px] text-[14px] font-normal text-[#a0abae]">
        <Search size={15} strokeWidth={2.6} className="text-[#d5dbdb]" /><Fit w={42} className="ml-[9px] italic">Search</Fit><Fit w={45} className="ml-auto mr-[9px]">[Alt+S]</Fit>
      </div>
      <div className="ml-auto flex items-center pr-[18px]">
        <ShellIcon /><HeadSep className="ml-[17px]" />
        <Bell size={18} strokeWidth={2.4} className="ml-[17px]" /><HeadSep className="ml-[16px]" />
        <svg className="ml-[16px]" width="17" height="17" viewBox="0 0 16 16" fill="none" stroke="#fff" strokeWidth="1.700"><circle cx="8" cy="8" r="7" /><path d="M5.800 6.200c0-3 4.400-2.800 4.400-.2C10.200 7.700 8 7.700 8 9.500M8 10.800v1.700" /></svg><HeadSep className="ml-[16px]" />
        <AwsGear className="ml-[16px]" /><HeadSep className="ml-[16px]" />
        <Fit w={57.5} className="ml-[17px]">N. Virginia</Fit><Tri size={9} className="ml-[5px]" />
        <HeadSep className="ml-[17px]" />
        <Fit w={131} className="ml-[18px]">Bruno Rodrigues Franco</Fit><Tri size={9} className="ml-[5px]" />
      </div>
    </div>
  );
}

const nav: { label: string; w: number; kind?: "head" | "current" | "first" | "badge" }[] = [
  { label: "EC2 Dashboard", w: 96, kind: "first" }, { label: "EC2 Global View", w: 103 }, { label: "Events", w: 42 },
  { label: "Instances", w: 62, kind: "head" }, { label: "Instances", w: 61, kind: "current" }, { label: "Instance Types", w: 93 },
  { label: "Launch Templates", w: 115 }, { label: "Spot Requests", w: 91 }, { label: "Savings Plans", w: 86 }, { label: "Reserved Instances", w: 121 },
  { label: "Dedicated Hosts", w: 103 }, { label: "Capacity Reservations", w: 139 }, { label: "New", w: 25, kind: "badge" },
  { label: "Images", w: 48, kind: "head" }, { label: "AMIs", w: 31 }, { label: "AMI Catalog", w: 77 },
  { label: "Elastic Block Store", w: 122, kind: "head" }, { label: "Volumes", w: 55 }, { label: "Snapshots", w: 66 }, { label: "Lifecycle Manager", w: 114 },
  { label: "Network & Security", w: 129, kind: "head" }, { label: "Security Groups", w: 101 }, { label: "Elastic IPs", w: 63 },
  { label: "Placement Groups", w: 116 }, { label: "Key Pairs", w: 57 }, { label: "Network Interfaces", w: 121 },
];

function AwsSidebar() {
  return (
    <div className="flex w-[241px] shrink-0 border-r border-[#aab7b8] bg-white">
      <div className="flex-1 overflow-hidden pt-[16px] text-[14px] text-[#545b64]">
        {nav.map((n, i) => {
          if (n.kind === "head")
            return <div key={i} className="mt-3 flex h-[30.500px] items-center pl-[13px] font-bold text-[#545b64]"><Tri size={10} /><Fit w={n.w} className="ml-[8px] text-[13.500px]">{n.label}</Fit></div>;
          if (n.kind === "badge")
            return <div key={i} className="flex h-[23px] items-start pl-[40px] pt-px text-[12px] font-bold text-[#0073bb]"><span className="border-b border-dashed border-[#0073bb] pb-[3px]"><Fit w={n.w}>{n.label}</Fit></span></div>;
          return (
            <div key={i} className="flex h-[30px] items-center pl-[33px]">
              <Fit w={n.w} className={n.kind === "current" ? "font-bold text-[#0073bb]" : ""}>{n.label}</Fit>
              {n.kind === "first" && <X size={19} strokeWidth={2.4} className="ml-auto mr-[20px]" />}
            </div>
          );
        })}
      </div>
      <div className="mr-[2px] flex w-[15px] flex-col items-center bg-[#f1f1f1]">
        <div className="flex h-[17px] items-center"><Tri size={7} up className="text-[#a3a3a3]" /></div>
        <div className="h-[661px] w-[13px] bg-[#c1c1c1]" />
        <div className="mt-auto flex h-[17px] items-center"><Tri size={7} className="text-[#505050]" /></div>
      </div>
    </div>
  );
}

type Col = { label: string; w: number; cls: string; tri?: boolean };
const cols: Col[] = [
  { label: "Instance ID", w: 73, cls: "w-[200px]" },
  { label: "Instance state", w: 92, cls: "w-[160px]", tri: true },
  { label: "Instance type", w: 89, cls: "w-[150px]", tri: true },
  { label: "Status check", w: 82, cls: "w-[150px]" },
  { label: "Alarm status", w: 84, cls: "w-[130px]" },
  { label: "Availability Zone", w: 112, cls: "w-[170px]", tri: true },
  { label: "Public IPv4 DNS", w: 106, cls: "w-[200px]", tri: true },
  { label: "Public IPv4 ...", w: 90, cls: "w-[150px]", tri: true },
  { label: "Elastic IP", w: 60, cls: "w-[150px]" },
];

const instances: { id: string; w: number; state: "Running" | "Stopped" | "Terminated"; dns?: string; ip?: string }[] = [
  { id: "i-00f4cc8bb3e769e14", w: 141, state: "Running", dns: "ec2-18-207-117-232.co…", ip: "18.207.117.232" },
  { id: "i-0b1acea91d75cb89d", w: 143, state: "Running", dns: "ec2-100-26-139-172.co…", ip: "100.26.139.172" },
  { id: "i-05a506f99168a128b", w: 145, state: "Stopped" },
  { id: "i-0e0eb7ec746060966", w: 145, state: "Terminated" },
  { id: "i-02b66af334d3fdcf7", w: 137, state: "Terminated" },
  { id: "i-0d1a616399cb5f44c", w: 142, state: "Terminated" },
  { id: "i-0db9bd08e2d3ab195", w: 147, state: "Terminated" },
  { id: "i-03e44999be7d986da", w: 147, state: "Terminated" },
  { id: "i-0d15a03a89e35b504", w: 147, state: "Terminated" },
  { id: "i-04a1caf2eec736ab9", w: 139, state: "Terminated" },
  { id: "i-0c1e19bbe17b75a62", w: 145, state: "Terminated" },
  { id: "i-0c6b89b634911457a", w: 147, state: "Terminated" },
];

const Check = () => <span className="h-[14px] w-[14px] rounded-[2px] border border-[#687078] bg-white" />;

function StateIcon({ kind }: { kind: "ok" | "minus" | "clock" }) {
  return (
    <svg width="16" height="16" viewBox="0 0 16 16" fill="none" stroke="currentColor" strokeWidth="1.700" className="shrink-0">
      <circle cx="8" cy="8" r="7" />
      {kind === "ok" && <path d="m5 8 2.300 2.300L11.200 6" />}
      {kind === "minus" && <path d="M4.500 8h7" />}
      {kind === "clock" && <path d="M8.500 4v5H5.500" />}
    </svg>
  );
}

function InstanceRow({ r }: { r: (typeof instances)[number] }) {
  const running = r.state === "Running";
  const gone = r.state === "Terminated";
  return (
    <div className="flex h-[33.420px] shrink-0 items-center border-b border-[#eaeded] pt-[2px] text-[#16191f]">
      <div className="w-[52px] shrink-0 pl-[19px]"><span className="flex"><Check /></span></div>
      <div className="w-[140px] shrink-0" />
      <div className="w-[200px] shrink-0 pl-[17px] text-[#0f69b4]"><Fit w={r.w}>{r.id}</Fit></div>
      <div className={"flex w-[160px] shrink-0 items-center pl-[17px] " + (running ? "text-[#1d8102]" : "text-[#687078]")}>
        <StateIcon kind={running ? "ok" : "minus"} />
        <Fit w={gone ? 70 : 53} className="ml-[4px]">{r.state}</Fit>
        {!gone && <span className="flex gap-[8px] pb-[3px] pl-[12px] text-[#545b64]"><ZoomIn size={16} strokeWidth={2.4} /><ZoomOut size={16} strokeWidth={2.4} /></span>}
      </div>
      <div className="w-[150px] shrink-0 pl-[17px]"><Fit w={53}>t2.micro</Fit></div>
      <div className="flex w-[150px] shrink-0 items-center pl-[17px] text-[#687078]">{running ? <><StateIcon kind="clock" /><Fit w={66} className="ml-[4px]">Initializing</Fit></> : "–"}</div>
      <div className="flex w-[130px] shrink-0 items-center pl-[17px]"><Fit w={65}>No alarms</Fit><Plus size={20} strokeWidth={1.8} className="ml-[11px] text-[#545b64]" /></div>
      <div className="w-[170px] shrink-0 pl-[17px]"><Fit w={67}>us-east-1a</Fit></div>
      <div className="w-[200px] shrink-0 pl-[17px]">{r.dns ? <Fit w={166}>{r.dns}</Fit> : "–"}</div>
      <div className="w-[150px] shrink-0 pl-[17px]">{r.ip ? <Fit w={100}>{r.ip}</Fit> : "–"}</div>
      <div className="w-[150px] shrink-0 pl-[17px]">–</div>
    </div>
  );
}

function AwsMain() {
  return (
    <div className="flex min-w-0 flex-1 bg-white">
      <div className="flex w-[1662px] shrink-0 flex-col border-r border-[#e3e5e6] text-[14px]">
        <div className="flex h-[83px] shrink-0 flex-col border-b border-[#eaeded] bg-[#fafafa] pl-[19px] pr-[19px]">
          <div className="mt-[10px] flex h-7 items-center">
            <Fit w={79} className="text-[18px] font-bold text-[#16191f]">Instances</Fit>
            <Fit w={32} className="ml-[5px] text-[18px] text-[#687078]">(13)</Fit>
            <Fit w={23} className="ml-[8px] mt-[3px] text-[12px] font-bold text-[#0073bb]">Info</Fit>
            <div className="ml-auto flex items-center gap-2 font-bold text-[#545b64]">
              <span className="flex h-7 w-[50px] items-center justify-center rounded-[2px] border border-[#545b64] bg-white"><RotateCw size={18} strokeWidth={2.3} /></span>
              <span className="flex h-7 w-[98px] items-center justify-center rounded-[2px] border border-[#d5dbdb] bg-white text-[#aab7b8]"><Fit w={56}>Connect</Fit></span>
              <span className="flex h-7 w-[156px] items-center justify-center rounded-[2px] border border-[#545b64] bg-white"><Fit w={95}>Instance state</Fit><Tri className="ml-[10px]" /></span>
              <span className="flex h-7 w-[113px] items-center justify-center rounded-[2px] border border-[#545b64] bg-white"><Fit w={51}>Actions</Fit><Tri className="ml-[10px]" /></span>
              <span className="flex gap-[2px] text-[#16191f]">
                <span className="flex h-7 w-[154px] items-center justify-center rounded-l-[2px] bg-[#ff9a26]"><Fit w={116}>Launch instances</Fit></span>
                <span className="flex h-7 w-[30px] items-center justify-center rounded-r-[2px] bg-[#ff9a26]"><Tri /></span>
              </span>
            </div>
          </div>
          <div className="mt-[6px] flex h-7 items-center">
            <div className="flex h-7 w-[648px] items-center rounded-[2px] border border-[#687078] bg-white pl-[8px]">
              <Search size={16} strokeWidth={2.4} className="text-[#545b64]" /><Fit w={298} className="ml-[8px] italic text-[#687078]">Find Instance by attribute or tag (case-sensitive)</Fit>
            </div>
            <div className="ml-auto flex items-center pr-[5px] text-[#aab7b8]">
              <ChevronLeft size={20} strokeWidth={2} /><span className="ml-[14px] w-[9px] text-[#16191f]">1</span><ChevronRight size={20} strokeWidth={2} className="ml-[13px]" />
              <span className="ml-[8px] h-7 w-px bg-[#eaeded]" /><AwsGear className="ml-[13px] text-[#545b64]" />
            </div>
          </div>
        </div>
        <div className="flex h-[33px] shrink-0 items-center border-b border-[#eaeded] bg-[#fafafa] font-bold text-[#545b64]">
          <div className="flex h-5 w-[53px] shrink-0 items-center border-r border-[#eaeded] pl-[19px]"><Check /></div>
          <div className="flex h-5 w-[140px] shrink-0 items-center border-r border-[#545b64] pl-[16px]">
            <Fit w={39}>Name</Fit>
            <svg className="ml-[4px]" width="15" height="15" viewBox="0 0 15 15" fill="none" stroke="currentColor"><path d="M3 11 11.500 1.500" strokeWidth="3" /><path d="m1 13.500 1.500-3" strokeWidth="1.500" /><path d="M6 13.500h8" strokeWidth="1.800" /></svg>
            <Tri hollow className="ml-auto mr-[14px]" />
          </div>
          {cols.map((c, i) => (
            <div key={c.label} className={"flex h-5 shrink-0 items-center border-r border-[#545b64] pl-[16px] " + c.cls}>
              <Fit w={c.w} className={i === 1 ? "text-[#16191f]" : ""}>{c.label}</Fit>
              {c.tri && <Tri hollow={i !== 1} up={i === 1} className={"ml-auto mr-[14px] " + (i === 1 ? "text-[#16191f]" : "")} />}
            </div>
          ))}
        </div>
        {instances.map((r) => <InstanceRow key={r.id} r={r} />)}
        <div className="mt-[2px] flex h-[17px] shrink-0 items-center border-b border-[#c3c8cb] bg-[#f1f1f1]">
          <Tri size={8} className="ml-[3px] rotate-90 text-[#a3a3a3]" /><div className="ml-[5px] h-[13px] w-[1090px] bg-[#c1c1c1]" />
          <Tri size={8} className="ml-auto mr-[4px] -rotate-90 text-[#505050]" />
        </div>
        <div className="flex h-[55px] shrink-0 items-center pl-[20px] pr-[23px]">
          <Fit w={153} className="text-[18px] font-bold text-[#16191f]">Select an instance</Fit>
          <AwsGear className="ml-auto text-[#545b64]" /><span className="ml-[9px] h-6 w-px bg-[#eaeded]" /><X size={19} strokeWidth={2.2} className="ml-[8px] text-[#545b64]" />
        </div>
      </div>
      <div className="flex flex-1 flex-col items-center bg-[#f1f1f1]">
        <div className="flex h-[17px] items-center"><Tri size={7} up className="text-[#a3a3a3]" /></div>
        <div className="h-[786px] w-[13px] bg-[#c1c1c1]" />
        <div className="mt-auto flex h-[17px] items-center"><Tri size={7} className="text-[#505050]" /></div>
      </div>
    </div>
  );
}

function Browser() {
  return (
    <div className="flex h-[1029px] w-[1920px] shrink-0 flex-col bg-white font-['Open_Sans',sans-serif] leading-none">
      <ChromeFrame />
      <AwsHeader />
      <div className="flex min-h-0 flex-1"><AwsSidebar /><AwsMain /></div>
      <div className="flex h-7 shrink-0 items-center border-t border-[#566270] bg-[#232f3e] pt-[2px] text-[12px] font-semibold text-white">
        <span className="ml-[16px]"><ShellIcon /></span><Fit w={60} className="ml-[5px]">CloudShell</Fit><Fit w={52} className="ml-[24px]">Feedback</Fit>
        <Fit w={275} className="ml-auto">© 2023, Amazon Web Services, Inc. or its affiliates.</Fit>
        <Fit w={39} className="ml-[30px]">Privacy</Fit><Fit w={34} className="ml-[25px]">Terms</Fit><Fit w={104} className="ml-[25px] mr-[15px]">Cookie preferences</Fit>
      </div>
    </div>
  );
}

/* ------------------------------------------------------------------- Clock */

function ClockWindow() {
  const railItem = "flex h-10 w-full items-center justify-center";
  return (
    <div className="absolute left-[2450px] top-[345px] flex h-[509px] w-[728px] overflow-hidden rounded-lg border border-[#9b9b9f] bg-[#f8f9fd] font-['Open_Sans',sans-serif] leading-none text-[#1b1b1b]">
      <div className="flex w-[48px] shrink-0 flex-col items-center border-r border-[#e3e6ee] bg-linear-to-b from-[#eef5f7] to-[#eff2fb]">
        <div className="flex h-9 items-center justify-center"><Menu size={18} strokeWidth={1.3} /></div>
        <div className={railItem}>
          <svg width="17" height="17" viewBox="0 0 17 17" fill="none" stroke="#1b1b1b"><circle cx="8.500" cy="8.500" r="7.700" strokeDasharray="5 1.050" strokeWidth="1.200" /><circle cx="8.500" cy="8.500" r="5" /><path d="M8.500 3.500a5 5 0 0 1 3.500 8.500l-3.500-3z" fill="#1b1b1b" /></svg>
        </div>
        <div className={railItem}><Hourglass size={18} strokeWidth={1.5} /></div>
        <div className={railItem}><Bell size={17} strokeWidth={1.6} /></div>
        <div className="flex h-10 w-full items-center pl-[3px]">
          <div className="flex h-9 w-10 items-center rounded-[4px] bg-[#e7eaf0]"><span className="h-4 w-[3px] rounded-full bg-[#0067c0]" /><Timer size={18} strokeWidth={1.5} className="ml-[8px]" /></div>
        </div>
        <div className={railItem}>
          <svg width="17" height="17" viewBox="0 0 17 17" fill="none" stroke="#1b1b1b" strokeWidth="1.100"><circle cx="8.500" cy="8.500" r="7.500" /><path d="M7 1.200 6.500 5 4 7.500l1.500 2.500L4.500 14M10.500 1.500 9.500 4.500l3 2 3-.5M12 15l-2-2.500 1.500-2.500h3.500" /></svg>
        </div>
        <div className="mt-auto flex size-6 items-center justify-center rounded-full bg-[#d9dde3] text-[9px] font-semibold">BF</div>
        <div className="mb-[4px] mt-[10px] flex h-10 items-center"><Settings size={16} strokeWidth={1.4} /></div>
      </div>
      <div className="flex flex-1 flex-col bg-linear-to-br from-[#f6fcfd] to-[#f8f9fd] to-20%">
        <div className="flex h-9 shrink-0 items-center pl-[8px] pr-[15px]">
          <svg width="15" height="15" viewBox="0 0 15 15"><rect width="15" height="15" rx="3" fill="#76818c" /><circle cx="7.500" cy="7.500" r="6.300" fill="#e5e8ea" /><path d="M7.500 8 3.500 5M7.500 8l4-6" stroke="#222" strokeWidth="1.200" /><path d="M7.500 8v5" stroke="#e06c2c" strokeWidth="1.500" /></svg>
          <Fit w={30} className="ml-[14px] mt-[3px] text-[12px]">Clock</Fit>
          <div className="ml-auto flex items-center pb-[3px]"><Minus size={13} strokeWidth={2} /><Square size={12} strokeWidth={2} className="ml-[33px]" /><X size={15} strokeWidth={1.7} className="ml-[32px]" /></div>
        </div>
        <div className="mt-[69px] flex h-[19px] items-center justify-end pb-px pr-[92px]">
          <svg width="15" height="15" viewBox="0 0 15 15" fill="none" stroke="#1b1b1b" strokeWidth="1.100"><path d="M1 14 14 1M8.500 1H14v5.500M1 8.500V14h5.500" /></svg>
          <svg className="ml-[25px]" width="15" height="15" viewBox="0 0 15 15" fill="none" stroke="#1b1b1b" strokeWidth="1.100"><path d="M1 5V3a2 2 0 0 1 2-2h9a2 2 0 0 1 2 2v9a2 2 0 0 1-2 2H9M8 1v6h6M1 14l5-5M2 9h4v4" /></svg>
        </div>
        <div className="flex h-[103px] items-baseline pl-[78px] text-[112px] leading-[84px]">
          <span className="w-[120px] text-center"><Fit w={119}>00</Fit></span><span className="relative -top-[8px] w-[25px] text-center"><Fit w={25}>:</Fit></span>
          <span className="w-[120px] text-center"><Fit w={119}>04</Fit></span><span className="relative -top-[8px] w-[25px] text-center"><Fit w={25}>:</Fit></span>
          <span className="w-[120px] text-center"><Fit w={119}>13</Fit></span><Fit w={21}>.</Fit><Fit w={82} className="text-[77px]">71</Fit>
        </div>
        <div className="flex h-[24px] items-center gap-[25.500px] pl-[78px] text-[20px]">
          <span className="w-[120px] text-center"><Fit w={20}>hr</Fit></span><span className="w-[120px] text-center"><Fit w={37}>min</Fit></span><span className="w-[120px] text-center"><Fit w={32}>sec</Fit></span>
        </div>
        <div className="mt-[42px] flex items-center gap-[26px] pl-[213px]">
          <div className="flex size-[67px] items-center justify-center gap-[5px] rounded-full bg-[#0067c0]"><span className="h-[22px] w-[9px] rounded-[3px] bg-white" /><span className="h-[22px] w-[9px] rounded-[3px] bg-white" /></div>
          <div className="flex size-[66px] items-center justify-center rounded-full border border-[#e9eaee] border-b-[#cdced2] bg-[#fefefe]"><svg className="mt-[4px]" width="21" height="24" viewBox="0 0 21 24"><path d="M1 24V0" stroke="#1b1b1b" strokeWidth="1.500" /><path d="M1 0h20l-4 8 4 8H1z" fill="#1b1b1b" /></svg></div>
          <div className="flex size-[66px] items-center justify-center rounded-full border border-[#e9eaee] border-b-[#cdced2] bg-[#fefefe]"><RotateCcw size={28} strokeWidth={1.4} /></div>
        </div>
      </div>
    </div>
  );
}

export default function App() {
  return (
    <div className="relative flex h-[1029px] w-[3638px] overflow-hidden bg-white">
      <JMeter />
      <Word />
      <Browser />
      <div className="absolute left-[2450px] top-[345px] h-[509px] w-[728px] rounded-lg shadow-[0_28px_45px_rgba(0,0,0,0.32),0_2px_20px_rgba(0,0,0,0.2)]" />
      <ClockWindow />
    </div>
  );
}
